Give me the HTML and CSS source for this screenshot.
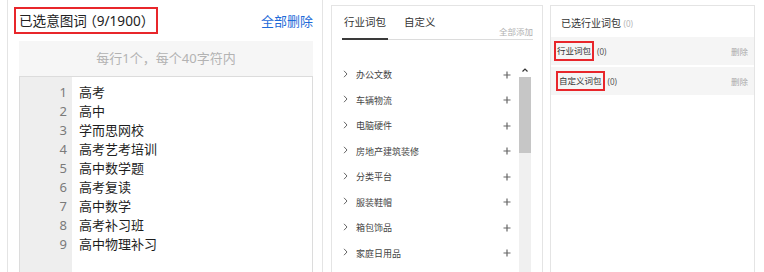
FILE: index.html
```html
<!DOCTYPE html>
<html lang="zh-CN">
<head>
<meta charset="utf-8">
<title>已选意图词</title>
<link rel="stylesheet" href="styles.css">
</head>
<body>
<div class="wrap">
  <section class="panel panel-left">
    <div class="left-head">
      <div class="left-title">已选意图词<span class="title-count">（9/1900）</span></div>
      <a class="link-blue">全部删除</a>
    </div>
    <div class="hint">每行1个，每个40字符内</div>
    <div class="editor">
      <div class="gutter">
        <div>1</div><div>2</div><div>3</div><div>4</div><div>5</div><div>6</div><div>7</div><div>8</div><div>9</div>
      </div>
      <div class="lines">
        <div>高考</div><div>高中</div><div>学而思网校</div><div>高考艺考培训</div><div>高中数学题</div><div>高考复读</div><div>高中数学</div><div>高考补习班</div><div>高中物理补习</div>
      </div>
    </div>
  </section>

  <section class="panel panel-mid">
    <div class="tabs">
      <div class="tab active">行业词包</div>
      <div class="tab">自定义</div>
      <div class="add-all">全部添加</div>
    </div>
    <div class="list-area">
      <ul class="list">
        <li><span class="chev"><svg width="5" height="8" viewBox="0 0 5 8"><path d="M1 0.8 L4 4 L1 7.2" fill="none" stroke="#666" stroke-width="1"/></svg></span><span class="name">办公文数</span><span class="plus"><svg width="8" height="8" viewBox="0 0 8 8"><path d="M4 0.5V7.5M0.5 4H7.5" stroke="#666" stroke-width="1.2"/></svg></span></li>
        <li><span class="chev"><svg width="5" height="8" viewBox="0 0 5 8"><path d="M1 0.8 L4 4 L1 7.2" fill="none" stroke="#666" stroke-width="1"/></svg></span><span class="name">车辆物流</span><span class="plus"><svg width="8" height="8" viewBox="0 0 8 8"><path d="M4 0.5V7.5M0.5 4H7.5" stroke="#666" stroke-width="1.2"/></svg></span></li>
        <li><span class="chev"><svg width="5" height="8" viewBox="0 0 5 8"><path d="M1 0.8 L4 4 L1 7.2" fill="none" stroke="#666" stroke-width="1"/></svg></span><span class="name">电脑硬件</span><span class="plus"><svg width="8" height="8" viewBox="0 0 8 8"><path d="M4 0.5V7.5M0.5 4H7.5" stroke="#666" stroke-width="1.2"/></svg></span></li>
        <li><span class="chev"><svg width="5" height="8" viewBox="0 0 5 8"><path d="M1 0.8 L4 4 L1 7.2" fill="none" stroke="#666" stroke-width="1"/></svg></span><span class="name">房地产建筑装修</span><span class="plus"><svg width="8" height="8" viewBox="0 0 8 8"><path d="M4 0.5V7.5M0.5 4H7.5" stroke="#666" stroke-width="1.2"/></svg></span></li>
        <li><span class="chev"><svg width="5" height="8" viewBox="0 0 5 8"><path d="M1 0.8 L4 4 L1 7.2" fill="none" stroke="#666" stroke-width="1"/></svg></span><span class="name">分类平台</span><span class="plus"><svg width="8" height="8" viewBox="0 0 8 8"><path d="M4 0.5V7.5M0.5 4H7.5" stroke="#666" stroke-width="1.2"/></svg></span></li>
        <li><span class="chev"><svg width="5" height="8" viewBox="0 0 5 8"><path d="M1 0.8 L4 4 L1 7.2" fill="none" stroke="#666" stroke-width="1"/></svg></span><span class="name">服装鞋帽</span><span class="plus"><svg width="8" height="8" viewBox="0 0 8 8"><path d="M4 0.5V7.5M0.5 4H7.5" stroke="#666" stroke-width="1.2"/></svg></span></li>
        <li><span class="chev"><svg width="5" height="8" viewBox="0 0 5 8"><path d="M1 0.8 L4 4 L1 7.2" fill="none" stroke="#666" stroke-width="1"/></svg></span><span class="name">箱包饰品</span><span class="plus"><svg width="8" height="8" viewBox="0 0 8 8"><path d="M4 0.5V7.5M0.5 4H7.5" stroke="#666" stroke-width="1.2"/></svg></span></li>
        <li><span class="chev"><svg width="5" height="8" viewBox="0 0 5 8"><path d="M1 0.8 L4 4 L1 7.2" fill="none" stroke="#666" stroke-width="1"/></svg></span><span class="name">家庭日用品</span><span class="plus"><svg width="8" height="8" viewBox="0 0 8 8"><path d="M4 0.5V7.5M0.5 4H7.5" stroke="#666" stroke-width="1.2"/></svg></span></li>
      </ul>
      <div class="scrollbar">
        <div class="sb-up"><svg width="6" height="4" viewBox="0 0 6 4"><path d="M0.5 3.5 L3 1 L5.5 3.5" fill="none" stroke="#333" stroke-width="1.2"/></svg></div>
        <div class="sb-thumb"></div>
      </div>
    </div>
  </section>

  <section class="panel panel-right">
    <div class="right-title">已选行业词包 <span class="count">(0)</span></div>
    <div class="pkg-row">
      <span class="pkg-name">行业词包</span>
      <span class="pkg-count">(0)</span>
      <span class="pkg-del">删除</span>
    </div>
    <div class="pkg-row">
      <span class="pkg-name pkg-name-2">自定义词包</span>
      <span class="pkg-count">(0)</span>
      <span class="pkg-del">删除</span>
    </div>
  </section>
</div>
</body>
</html>
```

FILE: styles.css
```css
* { box-sizing: border-box; }
html, body {
  margin: 0;
  padding: 0;
  background: #fff;
  overflow: hidden;
}
body {
  font-family: "Noto Sans", "Noto Sans CJK SC", sans-serif;
  color: #222;
}
.wrap {
  display: flex;
  align-items: flex-start;
  padding-left: 7px;
  height: 272px;
}
.panel {
  border: 1px solid #e4e4e4;
  height: 300px;
  background: #fff;
}

/* left */
.panel-left {
  width: 316px;
  border-top: none;
}
.left-head {
  height: 41px;
  display: flex;
  align-items: center;
  justify-content: space-between;
  padding: 0 9px 0 6px;
}
.left-title {
  border: 2px solid #e8262b;
  height: 27px;
  line-height: 23px;
  padding: 0 8px 0 3px;
  font-size: 13.6px;
  color: #222;
  font-feature-settings: "halt";
}
.title-count {
  margin-left: 3px;
}
.link-blue {
  color: #1f6bd8;
  font-size: 13px;
  cursor: pointer;
  margin-top: -1px;
}
.hint {
  margin: 0 9px 0 11px;
  height: 35px;
  line-height: 35px;
  background: #f6f6f6;
  text-align: center;
  color: #b3b3b3;
  font-size: 13px;
}
.editor {
  margin: 0 9px 0 11px;
  border: 1px solid #dcdcdc;
  display: flex;
  height: 220px;
}
.gutter {
  width: 52px;
  background: #eeeeee;
  text-align: right;
  padding: 6px 5px 0 0;
  color: #7a7a7a;
  font-size: 13px;
  line-height: 19px;
}
.lines {
  padding: 6px 0 0 7px;
  font-size: 13px;
  line-height: 19px;
  color: #1e1e1e;
}

/* middle */
.panel-mid {
  width: 212px;
  margin-left: 8px;
  margin-top: 5px;
}
.tabs {
  margin: 0 9px 0 10px;
  height: 34px;
  border-bottom: 1px solid #dcdcdc;
  display: flex;
  align-items: flex-start;
}
.tab {
  height: 34px;
  line-height: 32px;
  padding: 0 2px;
  font-size: 10.5px;
  color: #333;
  margin-right: 14px;
}
.tab.active {
  border-bottom: 2px solid #3a3a3a;
  margin-bottom: -1px;
}
.add-all {
  margin-left: auto;
  align-self: flex-end;
  font-size: 8.5px;
  line-height: 12px;
  color: #b0b0b0;
  padding-bottom: 1px;
}
.list-area {
  display: flex;
  margin-top: 22px;
  padding-right: 11px;
}
.list {
  list-style: none;
  margin: 0;
  padding: 0;
  flex: 1;
}
.list li {
  height: 25.5px;
  display: flex;
  align-items: center;
  padding: 0 8px 0 11px;
  font-size: 9px;
  color: #444;
}
.chev {
  width: 13px;
  display: flex;
  align-items: center;
  margin-top: -2px;
}
.name { flex: 1; }
.plus {
  display: flex;
  align-items: center;
}
.scrollbar {
  width: 12px;
  height: 220px;
  background: #f0f0f0;
}
.sb-up {
  height: 15px;
  display: flex;
  align-items: center;
  justify-content: center;
  background: #fff;
}
.sb-thumb {
  height: 76px;
  background: #c6c6c6;
}

/* right */
.panel-right {
  width: 205px;
  margin-left: 7px;
  margin-top: 5px;
}
.right-title {
  padding: 3px 0 0 10px;
  height: 31px;
  line-height: 28px;
  font-size: 10px;
  color: #333;
}
.right-title .count {
  font-size: 8px;
  color: #b5b5b5;
}
.pkg-row {
  height: 28px;
  margin-bottom: 2px;
  background: #f5f5f5;
  display: flex;
  align-items: center;
  padding: 0 6px 0 3px;
}
.pkg-name {
  border: 2px solid #e8262b;
  height: 20px;
  line-height: 16px;
  padding: 0 1px;
  font-size: 8.5px;
  color: #333;
}
.pkg-name-2 { margin-left: 2px; }
.pkg-count {
  margin-left: 3px;
  font-size: 8px;
  color: #555;
}
.pkg-del {
  margin-left: auto;
  font-size: 8.5px;
  color: #aaa;
}
```
